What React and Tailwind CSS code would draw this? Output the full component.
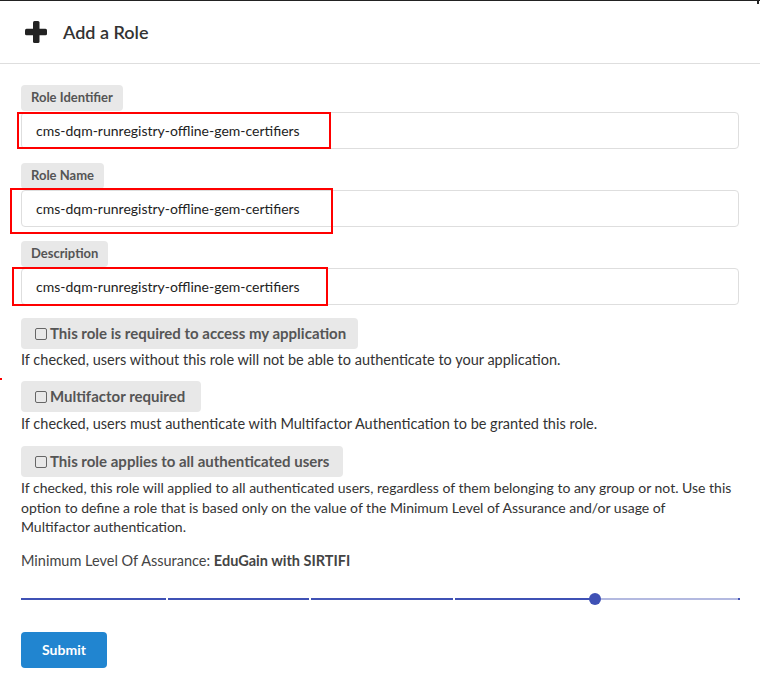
import React from "react";

const font = { fontFamily: "Lato, 'Liberation Sans', sans-serif" };

function Field({ label, value, box }) {
  return (
    <div className="relative flex flex-col items-start gap-[1px]">
      <div className="flex h-[26px] items-center rounded-[4px] bg-[#e8e8e8] px-[10px] text-[13px] font-bold text-[#555]">
        {label}
      </div>
      <div className="flex h-[37px] w-full items-center rounded-[4px] border border-[#dedede] bg-white pl-[14px] text-[14px] text-[#222]">
        {value}
      </div>
      <div className={"pointer-events-none absolute border-2 border-[#f00] " + box} />
    </div>
  );
}

function Check({ label, w }) {
  return (
    <div className={"flex h-[31px] items-center gap-[3px] rounded-[4px] bg-[#e8e8e8] pl-[14px] text-[15px] font-bold text-[#555] " + w}>
      <span className="inline-block h-[12px] w-[12px] rounded-[2px] border-[1.5px] border-[#666]" />
      <span>{label}</span>
    </div>
  );
}

function Slider() {
  return (
    <div className="relative flex h-[12px] w-[719px] items-center">
      <div className="flex h-[2px] w-full items-stretch gap-[2px]">
        <div className="w-[145px] bg-[#3f51b5]" />
        <div className="w-[141px] bg-[#3f51b5]" />
        <div className="w-[142px] bg-[#3f51b5]" />
        <div className="flex flex-1">
          <div className="w-[140px] bg-[#3f51b5]" />
          <div className="flex-1 bg-[#b3b9e0]" />
          <div className="w-[2px] bg-[#3f51b5]" />
        </div>
      </div>
      <div className="absolute left-[568px] top-0 h-[12px] w-[12px] rounded-full bg-[#3f51b5]" />
    </div>
  );
}

export default function App() {
  const val = "cms-dqm-runregistry-offline-gem-certifiers";
  return (
    <div className="relative flex h-[684px] w-[760px] flex-col overflow-hidden border-t border-[#222] bg-white" style={font}>
      <div className="absolute right-[1px] top-0 h-[3px] w-[2px] bg-[#222]" />
      <div className="absolute left-0 top-[377px] h-[2px] w-[2px] bg-[#f00]" />
      <div className="flex h-[63px] items-center gap-[16px] border-b border-[#dedede] pl-[25px]">
        <svg width="22" height="22" viewBox="0 0 22 22">
          <rect x="8" y="0" width="6.5" height="22" rx="1.5" fill="#222" />
          <rect x="0" y="7.7" width="22" height="6.5" rx="1.5" fill="#222" />
        </svg>
        <span className="text-[18px] font-semibold text-[#333]">Add a Role</span>
      </div>
      <div className="flex flex-col items-start px-[21px] pt-[21px]">
        <div className="flex w-[718px] flex-col gap-[14px]">
          <Field label="Role Identifier" value={val} box="left-[-4px] top-[27px] h-[37px] w-[314px]" />
          <Field label="Role Name" value={val} box="left-[-11px] top-[25px] h-[46px] w-[323px]" />
          <Field label="Description" value={val} box="left-[-9px] top-[26px] h-[39px] w-[316px]" />
        </div>
        <div className="mt-[13px]">
          <Check label="This role is required to access my application" w="w-[337px]" />
        </div>
        <p className="mt-[1px] text-[14.5px] leading-[20px] text-[#333]">
          If checked, users without this role will not be able to authenticate to your application.
        </p>
        <div className="mt-[11px]">
          <Check label="Multifactor required" w="w-[180px]" />
        </div>
        <p className="mt-[2px] text-[14.5px] leading-[20px] text-[#333]">
          If checked, users must authenticate with Multifactor Authentication to be granted this role.
        </p>
        <div className="mt-[12px]">
          <Check label="This role applies to all authenticated users" w="w-[322px]" />
        </div>
        <p className="mt-[1px] w-[712px] text-[14px] leading-[19.5px] text-[#333]">
          If checked, this role will applied to all authenticated users, regardless of them belonging to any group or not. Use this option to define a role that is based only on the value of the Minimum Level of Assurance and/or usage of Multifactor authentication.
        </p>
        <p className="mt-[14px] text-[14.5px] leading-[20px] text-[#444]">
          Minimum Level Of Assurance: <span className="font-bold">EduGain with SIRTIFI</span>
        </p>
        <div className="mt-[22px]">
          <Slider />
        </div>
        <button className="mt-[27px] h-[36px] w-[86px] rounded-[4px] bg-[#2185d0] text-[14px] font-bold text-white">
          Submit
        </button>
      </div>
    </div>
  );
}
